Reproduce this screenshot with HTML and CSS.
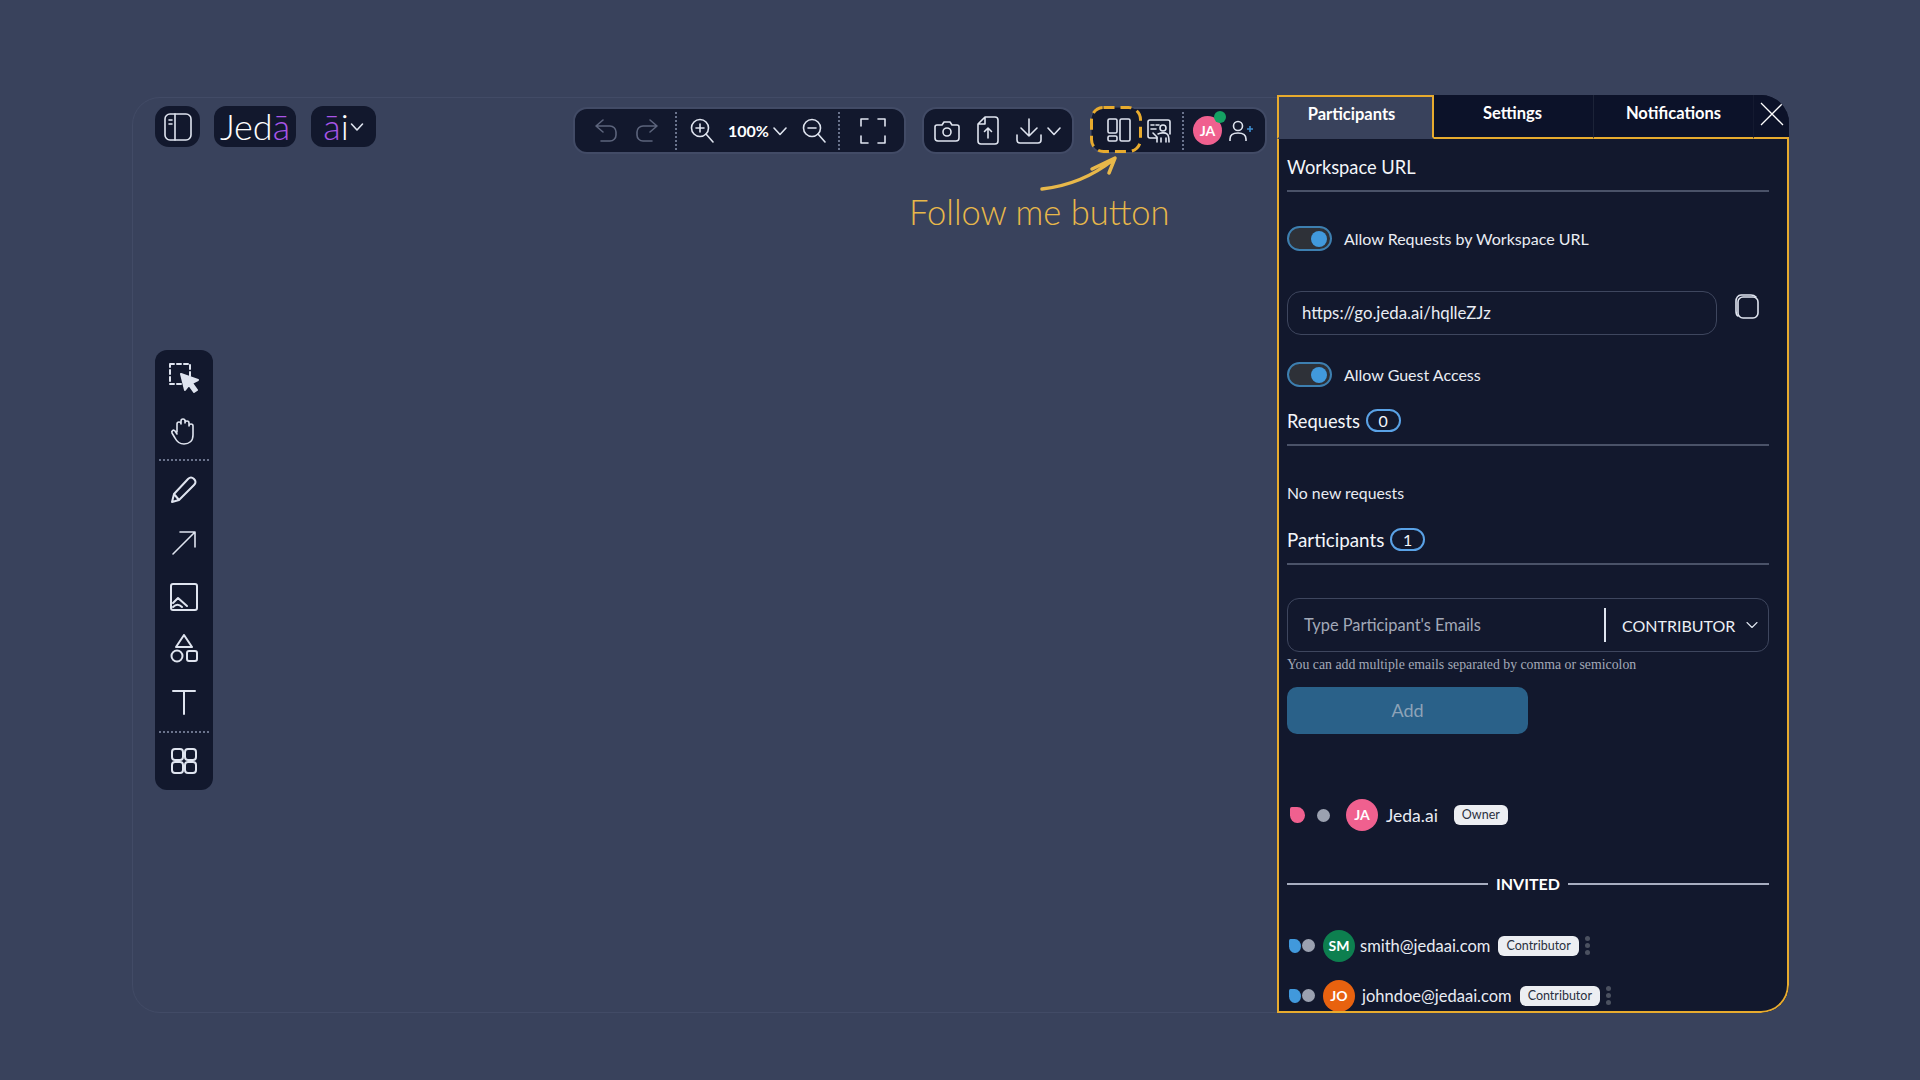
FILE: index.html
```html
<!DOCTYPE html>
<html lang="en">
<head>
    <meta charset="UTF-8">
    <title>Jedai Workspace Participants</title>
    <link rel="stylesheet" href="styles.css">
</head>
<body>
    <div class="frame">
        <div class="canvas">
            <!-- top toolbars -->
            <div class="topbar">
                <div class="chip chip-side">
                    <svg class="ico" width="30" height="30" viewBox="0 0 30 30"><rect x="2" y="2" width="26" height="26" rx="5"/><path d="M12 2v26M6 8h3M6 12h3"/></svg>
                </div>
                <div class="chip chip-logo"><span class="logo">Jed<span class="purple">ā</span></span></div>
                <div class="chip chip-ai"><span class="logo"><span class="purple">ā</span>i</span>
                    <svg class="ico" width="14" height="10" viewBox="0 0 14 10"><path d="M1.5 2l5.5 6 5.500-6"/></svg>
                </div>
                <div class="bar bar-zoom">
                    <svg class="ico dim" width="24" height="28" viewBox="0 0 24 28"><path d="M9 3L2 9l7 6M2 9h14a6 6 0 0 1 6 6v3a6 6 0 0 1-6 6H7"/></svg>
                    <svg class="ico dim redo" width="24" height="28" viewBox="0 0 24 28"><path d="M15 3l7 6-7 6M22 9H8a6 6 0 0 0-6 6v3a6 6 0 0 0 6 6h9"/></svg>
                    <span class="dots dots-a"></span>
                    <svg class="ico" width="24" height="26" viewBox="0 0 24 26"><circle cx="10" cy="10" r="8.500"/><path d="M16 16l7 8M10 6v8M6 10h8"/></svg>
                    <span class="pct">100%</span>
                    <svg class="ico chev" width="14" height="10" viewBox="0 0 14 10"><path d="M1 2l6 6.500 6-6.500"/></svg>
                    <svg class="ico out" width="24" height="26" viewBox="0 0 24 26"><circle cx="10" cy="10" r="8.500"/><path d="M16 16l7 8M6 10h8"/></svg>
                    <span class="dots dots-b"></span>
                    <svg class="ico" width="26" height="26" viewBox="0 0 26 26"><path d="M8 1H1v7M18 1h7v7M8 25H1v-7M18 25h7v-7"/></svg>
                </div>
                <div class="bar bar-file">
                    <svg class="ico" width="26" height="22" viewBox="0 0 26 22"><path d="M3 5h5l2-3h6l2 3h5a2 2 0 0 1 2 2v11a3 3 0 0 1-3 3H4a3 3 0 0 1-3-3V7a2 2 0 0 1 2-2z"/><circle cx="13" cy="12" r="4"/></svg>
                    <svg class="ico" width="22" height="29" viewBox="0 0 22 29"><path d="M8 1h10a3 3 0 0 1 3 3v21a3 3 0 0 1-3 3H4a3 3 0 0 1-3-3V8zM8 1v7H1M11 22V12M7.500 15.500L11 12l3.500 3.500"/></svg>
                    <svg class="ico" width="26" height="26" viewBox="0 0 26 26"><path d="M13 1v17M5 10l8 8 8-8M1 17v5a3 3 0 0 0 3 3h18a3 3 0 0 0 3-3v-5"/></svg>
                    <svg class="ico chev" width="14" height="10" viewBox="0 0 14 10"><path d="M1 2l6 6.500 6-6.500"/></svg>
                </div>
                <div class="bar bar-people">
                    <div class="follow">
                        <svg class="follow-dash" width="52" height="47" viewBox="0 0 52 47"><rect x="1.500" y="1.500" width="49" height="44" rx="12"/></svg>
                        <svg class="ico" width="24" height="24" viewBox="0 0 24 24"><rect x="1" y="1" width="9" height="14" rx="1.500"/><rect x="1" y="18" width="9" height="5" rx="1.500"/><rect x="13" y="1" width="10" height="22" rx="1.500"/></svg>
                    </div>
                    <svg class="ico presenter" width="24" height="24" viewBox="0 0 24 24"><path d="M10 19H3a2 2 0 0 1-2-2V3a2 2 0 0 1 2-2h18a2 2 0 0 1 2 2v12M4 6h3M4 10h5M9 6h3"/><circle cx="16" cy="9" r="3"/><path d="M10 23v-5l-4-4M11 15c2-1 7-2 9 0 2 1 2 4 2 8M14 23v-4M19 23v-4"/></svg>
                    <span class="dots dots-c"></span>
                    <div class="me">JA<span class="online"></span></div>
                    <svg class="adduser" width="24" height="22" viewBox="0 0 24 22"><circle cx="9" cy="6" r="4.500" stroke="#dfe4ef"/><path d="M1 21v-2c0-4 3-6 8-6s8 2 8 6v2" stroke="#dfe4ef"/><path d="M18 9h6M21 6v6" stroke="#3f8fd0"/></svg>
                </div>
            </div>

            <div class="note">Follow me button</div>
            <svg class="note-arrow" width="80" height="40" viewBox="0 0 80 40"><path d="M3 36C30 33 55 22 74 7M53 16L76 5l-6 15"/></svg>

            <!-- left tools -->
            <div class="tools">
                <svg class="ico heavy" width="30" height="30" viewBox="0 0 30 30"><rect x="1" y="1" width="20" height="20" stroke-dasharray="4 3"/><path class="fill" d="M12 11l17 6-6 3 5 7-3 2-5-7-4 5z"/></svg>
                <svg class="ico tool-gap" width="28" height="28" viewBox="0 0 28 28"><path d="M7 15V7a2 2 0 0 1 4 0V4a2 2 0 0 1 4 0v2a2 2 0 0 1 4 0v3a2 2 0 0 1 4 0v9c0 6-4 9-9 9s-7-2-9-6l-3-5c-1-2 2-4 3-2l2 3"/></svg>
                <span class="tool-dots"></span>
                <svg class="ico heavy" width="28" height="28" viewBox="0 0 28 28"><path d="M2 26l2-8L18 3c2-2 4-2 6 0s2 4 0 6L9 24zM4 18l5 6"/></svg>
                <svg class="ico tool-gap" width="26" height="26" viewBox="0 0 26 26"><path d="M2 24L24 2M9 2h15v15"/></svg>
                <svg class="ico heavy tool-gap" width="28" height="28" viewBox="0 0 28 28"><rect x="1" y="1" width="26" height="26" rx="2"/><path d="M3 20l5-5 9 8M3 24c3-3 6-3 9 0"/></svg>
                <svg class="ico heavy tool-gap" width="28" height="30" viewBox="0 0 28 30"><path d="M14 1l8 12H6z"/><circle cx="7" cy="22" r="5.500"/><rect x="17" y="17" width="10" height="10" rx="2"/></svg>
                <svg class="ico heavy tool-gap" width="24" height="26" viewBox="0 0 24 26"><path d="M1 2h22M12 2v23"/></svg>
                <span class="tool-dots tool-dots-b"></span>
                <svg class="ico heavy" width="26" height="26" viewBox="0 0 26 26"><rect x="1" y="1" width="11" height="11" rx="3"/><rect x="14" y="1" width="11" height="11" rx="3"/><rect x="1" y="14" width="11" height="11" rx="3"/><rect x="14" y="14" width="11" height="11" rx="3"/></svg>
            </div>
        </div>

        <!-- participants panel -->
        <div class="panel">
            <div class="tabs">
                <div class="tab active">Participants</div>
                <div class="tab tab-settings">Settings</div>
                <div class="tab tab-notes">Notifications</div>
                <div class="tab tab-close">
                    <svg width="24" height="24" viewBox="0 0 24 24"><path d="M1 1l22 22M23 1L1 23" stroke="#fff" fill="none" stroke-width="1.300"/></svg>
                </div>
            </div>
            <div class="body">
                <div class="head head-first">Workspace URL</div>
                <div class="switch-row row-a"><span class="switch"></span>Allow Requests by Workspace URL</div>
                <div class="url-row">
                    <div class="url">https://go.jeda.ai/hqlleZJz</div>
                    <svg class="ico copy" width="24" height="26" viewBox="0 0 24 26"><rect x="3" y="3" width="20" height="21" rx="5"/><path d="M3 22c-2-1-2-3-2-5V7c0-3 2-6 5-6h10c2 0 4 1 5 2"/></svg>
                </div>
                <div class="switch-row row-b"><span class="switch"></span>Allow Guest Access</div>

                <div class="head head-req">Requests <span class="count">0</span></div>
                <div class="empty">No new requests</div>
                <div class="head head-part">Participants <span class="count">1</span></div>

                <div class="invite">
                    <span class="invite-text">Type Participant's Emails</span>
                    <span class="invite-role">CONTRIBUTOR</span>
                    <svg class="ico" width="12" height="8" viewBox="0 0 12 8"><path d="M1 1.500l5 5 5-5"/></svg>
                </div>
                <div class="hint">You can add multiple emails separated by comma or semicolon</div>
                <div class="add">Add</div>

                <div class="person owner">
                    <span class="drop pink"></span>
                    <span class="status"></span>
                    <span class="avatar av-pink">JA</span>
                    <span class="name">Jeda.ai</span>
                    <span class="role">Owner</span>
                </div>

                <div class="invited">INVITED</div>

                <div class="person guest row-sm">
                    <span class="drop blue"></span>
                    <span class="status"></span>
                    <span class="avatar av-green">SM</span>
                    <span class="name">smith@jedaai.com</span>
                    <span class="role">Contributor</span>
                    <span class="more"><i></i><i></i><i></i></span>
                </div>
                <div class="person guest row-jo">
                    <span class="drop blue"></span>
                    <span class="status"></span>
                    <span class="avatar av-orange">JO</span>
                    <span class="name">johndoe@jedaai.com</span>
                    <span class="role">Contributor</span>
                    <span class="more"><i></i><i></i><i></i></span>
                </div>
            </div>
        </div>
    </div>
</body>
</html>
```

FILE: styles.css
```css
* {
    box-sizing: border-box;
}
body {
    margin: 0;
    height: 1080px;
    overflow: hidden;
    background-color: #39425c;
    font-family: Lato, "Noto Sans", sans-serif;
    color: #fff;
}
.frame {
    position: relative;
    display: flex;
    width: 1656px;
    height: 916px;
    margin: 97px 0 0 132px;
    border: 1px solid #424b66;
    border-radius: 28px;
}
.canvas {
    flex: 1;
    position: relative;
    min-width: 0;
}

/* shared icon stroke */
.ico {
    display: block;
    flex: none;
    fill: none;
    stroke: #dfe4ef;
    stroke-width: 1.6;
    stroke-linecap: round;
    stroke-linejoin: round;
}
.ico.heavy {
    stroke-width: 2;
}
.ico.dim {
    stroke: #5c647c;
}
.ico .fill {
    fill: #dfe4ef;
}

/* top toolbars */
.topbar {
    display: flex;
    align-items: flex-start;
    padding: 8px 0 0 22px;
}
.chip {
    display: flex;
    align-items: center;
    justify-content: center;
    height: 41px;
    background-color: #12182d;
    border-radius: 12px;
}
.chip-side {
    width: 45px;
    border-radius: 14px;
}
.chip-logo {
    width: 82px;
    margin-left: 14px;
}
.chip-ai {
    width: 65px;
    margin-left: 15px;
    gap: 1px;
}
.logo {
    font-weight: 300;
    font-size: 36px;
    line-height: 41px;
}
.purple {
    color: #a855e8;
}
.bar {
    display: flex;
    align-items: center;
    height: 47px;
    margin-top: 1px;
    background-color: #12182d;
    border: 2px solid #424b66;
    border-radius: 14px;
}
.bar-zoom {
    width: 333px;
    margin-left: 197px;
    padding-left: 19px;
}
.redo {
    margin-left: 17px;
}
.dots {
    display: block;
    height: 38px;
    border-left: 2px dotted #6a738c;
}
.dots-a {
    margin: 0 13px 0 16px;
}
.pct {
    margin-left: 14px;
    font-weight: 700;
    font-size: 16px;
}
.chev {
    margin-left: 4px;
}
.out {
    margin-left: 15px;
}
.dots-b {
    margin: 0 20px 0 12px;
}
.bar-file {
    width: 152px;
    margin-left: 16px;
    padding-left: 10px;
    gap: 17px;
}
.bar-file .chev {
    margin-left: -12px;
}
.bar-people {
    position: relative;
    width: 177px;
    margin-left: 16px;
}
.follow {
    position: relative;
    display: flex;
    align-items: center;
    justify-content: center;
    width: 52px;
    height: 47px;
    margin: -2px 0 0 -2px;
    padding-left: 6px;
}
.follow-dash {
    position: absolute;
    left: 0;
    top: 0;
    fill: #12182d;
    stroke: #e8ab2e;
    stroke-width: 3;
    stroke-dasharray: 11 6;
}
.follow .ico {
    position: relative;
}
.presenter {
    margin-left: 5px;
}
.dots-c {
    margin: 0 9px 0 11px;
}
.me {
    position: relative;
    width: 29px;
    height: 29px;
    line-height: 29px;
    text-align: center;
    font-size: 14px;
    font-weight: 700;
    background-color: #f0608f;
    border-radius: 50%;
}
.online {
    position: absolute;
    top: -5px;
    right: -4px;
    width: 12px;
    height: 12px;
    background-color: #15a163;
    border-radius: 50%;
}
.adduser {
    margin-left: 7px;
    fill: none;
    stroke-width: 1.6;
}

/* annotation over the canvas */
.note {
    position: absolute;
    left: 776px;
    top: 91px;
    font-weight: 300;
    font-size: 34.500px;
    line-height: 46px;
    color: #e8b84a;
    white-space: nowrap;
}
.note-arrow {
    position: absolute;
    left: 906px;
    top: 55px;
    fill: none;
    stroke: #e8b84a;
    stroke-width: 3.5;
    stroke-linecap: round;
    stroke-linejoin: round;
}

/* left tool column */
.tools {
    display: flex;
    flex-direction: column;
    align-items: center;
    width: 58px;
    height: 440px;
    margin: 196px 0 0 22px;
    padding-top: 13px;
    background-color: #12182d;
    border-radius: 12px;
}
.tool-gap {
    margin-top: 25px;
}
.tools svg:nth-child(2) {
    margin-top: 24px;
}
.tools svg:nth-child(5) {
    margin-top: 26.5px;
}
.tools svg:nth-child(6) {
    margin-top: 27px;
}
.tools svg:nth-child(7) {
    margin-top: 23px;
}
.tool-dots {
    display: block;
    width: 50px;
    margin: 14px 0 14.5px;
    border-top: 2px dotted #6a738c;
}
.tool-dots-b {
    margin: 16px 0 15px;
}

/* panel */
.panel {
    flex: none;
    width: 512px;
    height: 918px;
    margin: -3px -2px 0 0;
    overflow: hidden;
    background-color: #12182d;
    border-radius: 0 28px 28px 0;
}
.tabs {
    display: flex;
    height: 44px;
    background-color: #0c1229;
    font-size: 16.500px;
    font-weight: 700;
}
.tab {
    display: flex;
    align-items: center;
    justify-content: center;
    padding-bottom: 6px;
    border-bottom: 2px solid #e8ab2e;
}
.tab.active {
    width: 157px;
    padding-right: 8px;
    background-color: #39425c;
    border: 2px solid #e8ab2e;
    border-bottom: 2px solid #39425c;
}
.tab-settings {
    width: 160px;
    padding-right: 2px;
    border-right: 1px solid #1c2338;
}
.tab-notes {
    width: 160px;
    border-right: 1px solid #141a30;
}
.tab-close {
    flex: 1;
    padding: 0 0 4px 0;
}
.body {
    height: 874px;
    padding: 0 18px 0 8px;
    overflow: hidden;
    border: 2px solid #e8ab2e;
    border-top: none;
    border-radius: 0 0 28px 0;
}
.head {
    height: 37px;
    line-height: 24px;
    border-bottom: 2px solid #4a5268;
    font-size: 18.300px;
    color: #f4f6fa;
}
.head-first {
    margin-top: 16px;
}
.head-req {
    margin-top: 22px;
}
.head-part {
    margin-top: 25px;
    font-size: 18.800px;
}
.count {
    display: inline-block;
    width: 35px;
    height: 23px;
    margin-left: 1px;
    line-height: 19px;
    text-align: center;
    font-size: 16px;
    background-color: #12182d;
    border: 2px solid #5aa2e6;
    border-radius: 12px;
    vertical-align: 1px;
}
.switch-row {
    display: flex;
    align-items: center;
    height: 25px;
    font-size: 16px;
    color: #e9ecf3;
}
.row-a {
    margin-top: 34px;
}
.row-b {
    margin-top: 27px;
}
.switch {
    position: relative;
    width: 45px;
    height: 25px;
    margin-right: 12px;
    background-color: #2e3138;
    border: 2px solid #3d7fb0;
    border-radius: 13px;
}
.switch::after {
    content: "";
    position: absolute;
    right: 3px;
    top: 2.500px;
    width: 16px;
    height: 16px;
    background-color: #4199dc;
    border-radius: 50%;
}
.url-row {
    display: flex;
    align-items: flex-start;
    margin-top: 40px;
}
.url {
    width: 430px;
    height: 44px;
    padding-left: 14px;
    line-height: 41px;
    font-size: 16.800px;
    color: #e9ecf3;
    border: 1.500px solid #3e465e;
    border-radius: 14px;
}
.copy {
    margin: 3px 0 0 18px;
}
.empty {
    height: 20px;
    margin-top: 37px;
    line-height: 20px;
    font-size: 15.800px;
    color: #e9ecf3;
}
.invite {
    display: flex;
    align-items: center;
    height: 54px;
    margin-top: 33px;
    font-size: 16px;
    border: 1.500px solid #3e465e;
    border-radius: 12px;
}
.invite-text {
    width: 318px;
    height: 34px;
    padding-left: 16px;
    line-height: 34px;
    font-size: 16.400px;
    color: #a3a9b8;
    border-right: 2px solid #dfe4ef;
}
.invite-role {
    flex: 1;
    padding-left: 16px;
    color: #eceff5;
}
.invite .ico {
    margin-right: 10px;
    stroke-width: 1.100;
}
.hint {
    height: 16px;
    margin-top: 5px;
    line-height: 16px;
    font-family: "Liberation Serif", serif;
    font-size: 13.800px;
    color: #a3a9b8;
}
.add {
    width: 241px;
    height: 47px;
    margin-top: 14px;
    line-height: 47px;
    text-align: center;
    font-size: 18px;
    color: #8da3b8;
    background-color: #2a6189;
    border-radius: 10px;
}
.person {
    display: flex;
    align-items: center;
    height: 32px;
    font-size: 16.500px;
    color: #e9ecf3;
}
.owner {
    margin-top: 65px;
    padding-left: 3px;
    font-size: 17.500px;
}
.row-sm {
    margin-top: 36px;
    padding-left: 2px;
}
.row-jo {
    margin-top: 18px;
    padding-left: 2px;
}
.drop {
    width: 12px;
    height: 14px;
    border-radius: 15% 65% 60% 60%;
}
.owner .drop {
    width: 15px;
    height: 16px;
}
.pink {
    background-color: #f0608f;
}
.blue {
    background-color: #4199dc;
}
.status {
    width: 13px;
    height: 13px;
    margin-left: 12px;
    background-color: #9ba1b0;
    border-radius: 50%;
}
.guest .status {
    margin-left: 1px;
}
.avatar {
    width: 32px;
    height: 32px;
    margin: 0 8px 0 16px;
    line-height: 32px;
    text-align: center;
    font-size: 14px;
    font-weight: 700;
    color: #fff;
    border-radius: 50%;
}
.guest .avatar {
    margin: 0 5px 0 8px;
}
.row-jo .avatar {
    margin-right: 7px;
}
.av-pink {
    background-color: #f0608f;
}
.av-green {
    background-color: #0d7f4f;
}
.av-orange {
    background-color: #e8620f;
}
.role {
    height: 20px;
    margin-left: 8px;
    padding: 0 8px;
    line-height: 20px;
    font-size: 12.500px;
    color: #2a3040;
    background-color: #eceef2;
    border-radius: 6px;
}
.owner .role {
    margin-left: 16px;
}
.more {
    display: flex;
    flex-direction: column;
    gap: 2px;
    margin-left: 6px;
}
.more i {
    display: block;
    width: 5px;
    height: 5px;
    background-color: #4b5160;
    border-radius: 50%;
}
.invited {
    display: flex;
    align-items: center;
    gap: 8px;
    height: 20px;
    margin-top: 42.500px;
    font-size: 16px;
    font-weight: 700;
}
.invited::before,
.invited::after {
    content: "";
    flex: 1;
    border-top: 2px solid #a7adc0;
}
```
